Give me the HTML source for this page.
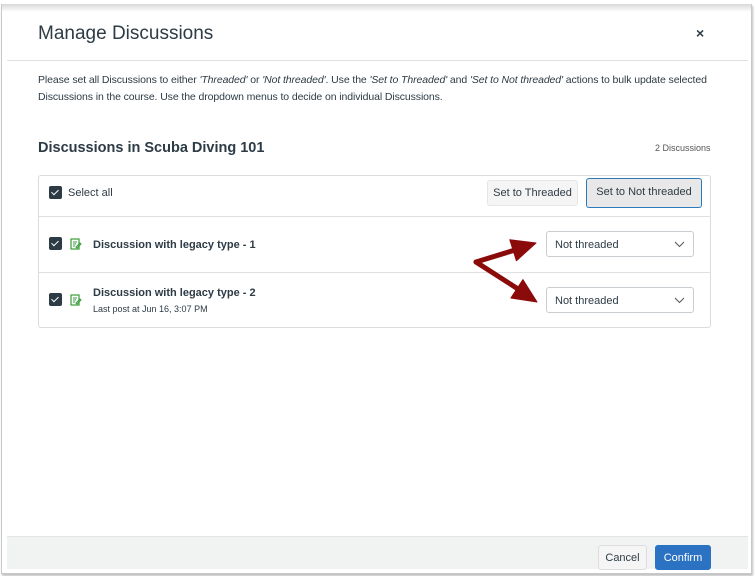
<!DOCTYPE html>
<html><head><style>
*{box-sizing:border-box;margin:0;padding:0}
body{width:755px;height:576px;background:#fff;font-family:"Liberation Sans",sans-serif;color:#2d3b45;position:relative;overflow:hidden}
.frame{position:absolute;left:1px;top:4px;width:751px;height:570px;border:1px solid #c8c8c8;border-top:none;box-shadow:1px 2px 2px rgba(0,0,0,.25);background:#fff}
.topshade{position:absolute;left:2px;top:4px;width:749px;height:8px;background:linear-gradient(#d8d8d8,#fff)}
.abs{position:absolute}
h1{position:absolute;left:38px;top:23px;font-size:19px;font-weight:normal;color:#2d3b45}
.x{position:absolute;left:696px;top:25px;font-size:14px;font-weight:bold}
.hr{position:absolute;left:7px;width:741px;height:1px;background:#e0e0e0}
.desc{position:absolute;left:38px;top:72px;font-size:10.5px;line-height:17px;color:#2d3b45;width:690px;letter-spacing:-0.1px}
h2{position:absolute;left:38px;top:140px;font-size:14.5px;font-weight:bold}
.count{position:absolute;left:655px;top:143px;font-size:9px;color:#555}
.box{position:absolute;left:38px;top:175px;width:673px;height:153px;border:1px solid #dcdcdc;border-radius:3px}
.cb{position:absolute;width:13px;height:13px;background:#2d3b45;border-radius:2px}
.cb:after{content:"";position:absolute;left:4px;top:2px;width:3px;height:6px;border:solid #fff;border-width:0 1.5px 1.5px 0;transform:rotate(45deg)}
.btn{position:absolute;font-size:11px;border-radius:3px;text-align:center;background:#f5f5f5;border:1px solid #e6e6e6}
.sel{position:absolute;left:546px;width:148px;height:26px;border:1px solid #c7cdd1;border-radius:3px;font-size:11px;padding:7px 8px}
.sel svg{position:absolute;right:8px;top:9px}
.t{position:absolute;font-size:11px;font-weight:bold}
.footer{position:absolute;left:7px;top:536px;width:741px;height:33px;background:#f1f2f2;border-top:1px solid #e3e3e3}
</style></head><body>
<div class="frame"></div>
<div class="topshade"></div>
<h1>Manage Discussions</h1>
<div class="x">×</div>
<div class="hr" style="top:60px"></div>
<div class="desc">Please set all Discussions to either <i>'Threaded'</i> or <i>'Not threaded'</i>. Use the <i>'Set to Threaded'</i> and <i>'Set to Not threaded'</i> actions to bulk update selected Discussions in the course. Use the dropdown menus to decide on individual Discussions.</div>
<h2>Discussions in Scuba Diving 101</h2>
<div class="count">2 Discussions</div>
<div class="box"></div>
<div class="hr" style="left:39px;width:671px;top:216px"></div>
<div class="hr" style="left:39px;width:671px;top:272px"></div>
<div class="cb" style="left:49px;top:186px"></div>
<div class="abs" style="left:68px;top:187px;font-size:11px">Select all</div>
<div class="btn" style="left:487px;top:180px;width:91px;height:26px;line-height:24px">Set to Threaded</div>
<div class="btn" style="left:586px;top:178px;width:116px;height:30px;line-height:27px;border:1.5px solid #2b7abc;background:#e8e8e8">Set to Not threaded</div>
<div class="cb" style="left:49px;top:237px"></div>
<div class="cb" style="left:49px;top:293px"></div>
<svg class="abs" style="left:70px;top:238px" width="12" height="12" viewBox="0 0 12 12"><rect x="1" y="1" width="8" height="10" fill="none" stroke="#3a9b3a" stroke-width="1.2"/><path d="M3 4h4M3 6h3M3 8h2M6 9l4-4 1 1-4 4z" stroke="#3a9b3a" fill="none" stroke-width="1"/></svg>
<svg class="abs" style="left:70px;top:294px" width="12" height="12" viewBox="0 0 12 12"><rect x="1" y="1" width="8" height="10" fill="none" stroke="#3a9b3a" stroke-width="1.2"/><path d="M3 4h4M3 6h3M3 8h2M6 9l4-4 1 1-4 4z" stroke="#3a9b3a" fill="none" stroke-width="1"/></svg>
<div class="t" style="left:93px;top:239px">Discussion with legacy type - 1</div>
<div class="t" style="left:93px;top:287px">Discussion with legacy type - 2</div>
<div class="abs" style="left:93px;top:304px;font-size:9px">Last post at Jun 16, 3:07 PM</div>
<div class="sel" style="top:231px">Not threaded<svg width="11" height="7"><path d="M1 1l4.5 4.5L10 1" stroke="#555" fill="none"/></svg></div>
<div class="sel" style="top:287px">Not threaded<svg width="11" height="7"><path d="M1 1l4.5 4.5L10 1" stroke="#555" fill="none"/></svg></div>
<svg class="abs" style="left:0;top:0" width="755" height="576">
<g fill="#8b0a0a" stroke="#8b0a0a" stroke-linejoin="round" stroke-linecap="round">
<path d="M476 262L515 250" stroke-width="5" fill="none"/>
<path d="M476 262L518 289" stroke-width="5" fill="none"/>
<path d="M536 243L516.4 260.7L509.8 239.7Z" stroke-width="1"/>
<path d="M537 302L510.9 298L522.9 279.6Z" stroke-width="1"/>
</g></svg>
<div class="footer"></div>
<div class="btn" style="left:598px;top:545px;width:49px;height:25px;line-height:24px;background:#f5f5f5;border-color:#ddd">Cancel</div>
<div class="btn" style="left:655px;top:545px;width:56px;height:25px;line-height:24px;background:#2b72c3;border-color:#2b72c3;color:#fff">Confirm</div>
</body></html>
